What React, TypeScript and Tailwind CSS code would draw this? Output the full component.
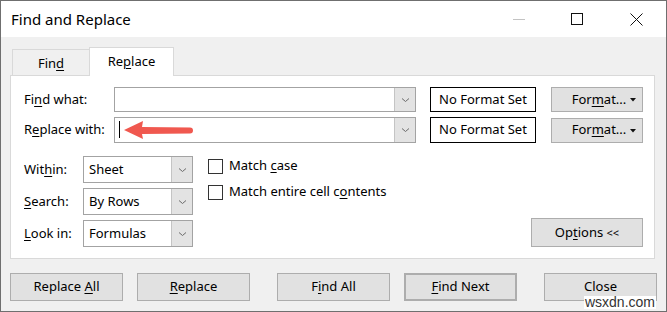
import { ReactNode } from "react";

const FONT = "font-['Noto_Sans','Open_Sans',sans-serif]";

function U({ children }: { children: ReactNode }) {
  return <span className="underline underline-offset-2 decoration-1">{children}</span>;
}

function Chevron() {
  return (
    <svg width="9" height="6" viewBox="0 0 9 6" className="text-[#6b6b6b]">
      <path d="M1 1.5 L4.5 4.5 L8 1.5" fill="none" stroke="currentColor" strokeWidth="1" />
    </svg>
  );
}

function Combo({ value, h, w, btn }: { value?: string; h: string; w: string; btn: string }) {
  return (
    <div className={`${h} ${w} flex border border-[#a3a3a3] bg-white`}>
      <div className="flex-1 flex items-center pl-[5px] text-[13px] text-black">{value}</div>
      <div className={`${btn} bg-[#e3e3e3] border-l border-[#c4c4c4] flex items-center justify-center`}>
        <Chevron />
      </div>
    </div>
  );
}

function Btn({ children, className = "" }: { children: ReactNode; className?: string }) {
  return (
    <div
      className={`flex items-center justify-center bg-[#e1e1e1] border border-[#adadad] text-[13px] text-black ${className}`}
    >
      <span className="whitespace-pre">{children}</span>
    </div>
  );
}

function FormatBtn() {
  return (
    <Btn className="w-[92px] h-[25px] relative">
      <span className="ml-[4px]">
        For<U>m</U>at...
      </span>
      <svg width="6" height="4" viewBox="0 0 6 4" className="absolute right-[6px] top-[10px]">
        <path d="M0 0 H6 L3 3.5 Z" fill="#111" />
      </svg>
    </Btn>
  );
}

function Check({ children }: { children: ReactNode }) {
  return (
    <div className="flex items-center gap-[6px] text-[13px] text-black h-[16px]">
      <div className="w-[15px] h-[15px] border border-[#333] bg-white" />
      <span>{children}</span>
    </div>
  );
}

export default function App() {
  return (
    <div className={`w-[667px] h-[312px] bg-[#f0f0f0] border border-[#6f6f6f] flex flex-col relative ${FONT}`}>
      {/* title bar */}
      <div className="h-[36px] bg-white flex items-center">
        <span className="ml-[10px] text-[15px] text-black">Find and Replace</span>
        <div className="ml-auto flex items-center h-full">
          <div className="w-[12px] h-px bg-[#c3c3c3] mr-[46px]" />
          <div className="w-[12px] h-[12px] border border-[#111] mr-[47px]" />
          <svg width="13" height="13" viewBox="0 0 13 13" className="mr-[23px]">
            <path d="M0.5 0.5 L12.5 12.5 M12.5 0.5 L0.5 12.5" stroke="#111" strokeWidth="1" />
          </svg>
        </div>
      </div>

      {/* tabs */}
      <div className="mt-[10px] h-[28px] flex items-end pl-[11px] relative z-10">
        <div className="w-[77px] h-[26px] border-t border-l border-[#d9d9d9] flex items-center justify-center text-[13px] text-black pt-[2px]">
          <span>
            Fin<U>d</U>
          </span>
        </div>
        <div className="w-[85px] h-[29px] -mb-px bg-white border border-b-0 border-[#d9d9d9] flex items-center justify-center text-[13px] text-black">
          <span>
            Re<U>p</U>lace
          </span>
        </div>
      </div>

      {/* panel */}
      <div className="ml-[9px] w-[645px] h-[184px] bg-white border border-[#d9d9d9] pt-[11px] pl-[13px] pr-[11px] flex flex-col">
        <div className="flex items-center h-[25px]">
          <span className="w-[90px] text-[13px] text-black">
            Fi<U>n</U>d what:
          </span>
          <Combo h="h-[25px]" w="w-[302px]" btn="w-[21px]" />
          <div className="ml-[14px] w-[106px] h-[25px] border border-black flex items-center justify-center text-[13px] text-black">
            No Format Set
          </div>
          <div className="ml-auto">
            <FormatBtn />
          </div>
        </div>
        <div className="flex items-center h-[26px] mt-[5px]">
          <span className="w-[90px] text-[13px] text-black">
            R<U>e</U>place with:
          </span>
          <div className="relative">
            <Combo h="h-[26px]" w="w-[302px]" btn="w-[21px]" />
            <div className="absolute left-[5px] top-[4px] w-px h-[17px] bg-black" />
            <svg width="72" height="22" viewBox="0 0 72 22" className="absolute left-[9px] top-[2px]">
              <path d="M1 11 L20 2 L19 8 L67 8.5 A3 3 0 0 1 67 14.5 L19 15 L20 20 Z" fill="#f0584f" />
            </svg>
          </div>
          <div className="ml-[14px] w-[106px] h-[26px] border border-black flex items-center justify-center text-[13px] text-black">
            No Format Set
          </div>
          <div className="ml-auto">
            <FormatBtn />
          </div>
        </div>

        <div className="flex mt-[13px]">
          <div className="flex flex-col gap-[5px]">
            {[
              [<>Wit<U>h</U>in:</>, "Sheet"],
              [<><U>S</U>earch:</>, "By Rows"],
              [<><U>L</U>ook in:</>, "Formulas"],
            ].map(([label, value], i) => (
              <div key={i} className="flex items-center">
                <span className="w-[59px] text-[13px] text-black">{label}</span>
                <Combo value={value as string} h="h-[27px]" w="w-[110px]" btn="w-[21px]" />
              </div>
            ))}
          </div>
          <div className="ml-[15px] pt-[2px] flex flex-col gap-[10px]">
            <Check>
              Match <U>c</U>ase
            </Check>
            <Check>
              Match entire cell c<U>o</U>ntents
            </Check>
          </div>
          <div className="ml-auto flex items-end">
            <Btn className="w-[112px] h-[29px]">
              Op<U>t</U>ions <span className="text-[11px]">&lt;&lt;</span>
            </Btn>
          </div>
        </div>
      </div>

      {/* bottom buttons */}
      <div className="mt-[14px] ml-[9px] flex h-[28px]">
        <Btn className="w-[113px] h-[28px]">
          Replace <U>A</U>ll
        </Btn>
        <Btn className="w-[113px] h-[28px] ml-[14px]">
          <U>R</U>eplace
        </Btn>
        <Btn className="w-[113px] h-[28px] ml-[27px]">
          F<U>i</U>nd All
        </Btn>
        <Btn className="w-[113px] h-[28px] ml-[14px] border-2 border-[#0078d7]">
          <U>F</U>ind Next
        </Btn>
        <Btn className="w-[113px] h-[28px] ml-[27px]">Close</Btn>
      </div>

      <span className="absolute right-[10px] bottom-[2px] bg-white px-[1px] leading-[13px] text-[14px] text-[#333] font-['Liberation_Sans',sans-serif]">
        wsxdn.com
      </span>
    </div>
  );
}
